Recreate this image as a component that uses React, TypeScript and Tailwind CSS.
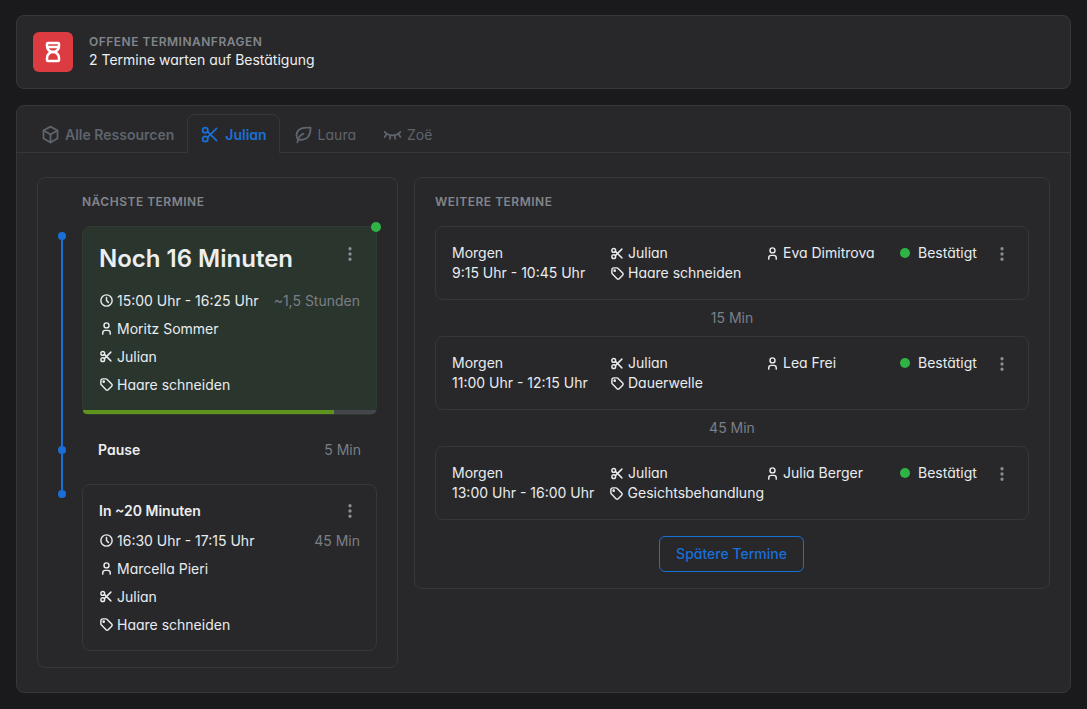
import React from "react";
import { TbHourglassHigh, TbBox, TbScissors, TbLeaf, TbEyeClosed, TbClock, TbUser, TbTag, TbDotsVertical } from "react-icons/tb";

const s = { size: 15, strokeWidth: 2.3 };

function Row({ icon, text, right, cls }: { icon: React.ReactNode; text: string; right?: string; cls?: string }) {
  return (
    <div className={`flex items-center justify-between h-[28px] ${cls ?? ""}`}>
      <div className="flex items-center gap-[3px] text-[14px] text-[#e9ecef]">
        <span className="w-[16px] -ml-[1px] flex justify-center text-[#e9ecef]">{icon}</span>
        <span>{text}</span>
      </div>
      {right && <span className="text-[14px] text-[#7a7f87]">{right}</span>}
    </div>
  );
}

function Future({ time, name, service }: { time: string; name: string; service: string }) {
  return (
    <div className="flex h-[74px] border border-[#36373a] rounded-[8px] pl-[16px] pt-[16px] text-[14px] leading-[20px] text-[#e9ecef]">
      <div className="w-[157px] shrink-0">
        <div>Morgen</div>
        <div>{time}</div>
      </div>
      <div className="w-[155px] shrink-0">
        <div className="flex items-center gap-[3px]"><span className="w-[16px] flex justify-center"><TbScissors {...s} /></span><span>Julian</span></div>
        <div className="flex items-center gap-[3px]"><span className="w-[16px] flex justify-center"><TbTag {...s} /></span><span>{service}</span></div>
      </div>
      <div className="w-[136px] shrink-0 flex items-start gap-[3px]">
        <span className="w-[16px] h-[20px] flex items-center justify-center"><TbUser {...s} /></span><span>{name}</span>
      </div>
      <div className="flex items-start">
        <span className="h-[20px] flex items-center"><span className="w-[10px] h-[10px] rounded-full bg-[#2fb344]" /></span>
        <span className="ml-[8px] w-[59px]">Bestätigt</span>
      </div>
      <span className="ml-[16px] mt-[1px] h-[20px] flex items-center text-[#868e96]"><TbDotsVertical size={18} strokeWidth={2.4} /></span>
    </div>
  );
}

function Gap({ t }: { t: string }) {
  return <div className="h-[36px] pb-[1px] flex items-center justify-center text-[14px] text-[#7a7f87]">{t}</div>;
}

function Tab({ icon, label, active, cls }: { icon: React.ReactNode; label: string; active?: boolean; cls?: string }) {
  return (
    <div className={`flex items-center gap-[4px] h-[39px] px-[12px] text-[14px] rounded-t-[8px] border border-b-0 -mb-px ${active ? "border-[#36373a] bg-[#28282a] text-[#1a6fd6] font-semibold" : "border-transparent text-[#5f646c] font-normal"} ${cls ?? ""}`}>
      {icon}
      <span>{label}</span>
    </div>
  );
}

export default function App() {
  return (
    <div className="min-h-screen bg-[#1a1a1c] pt-[15px] px-[16px] pb-[16px] font-['Inter','Liberation_Sans',sans-serif] [font-feature-settings:'cv11']">
      <div className="h-[74px] bg-[#28282a] border border-[#36373a] rounded-[8px] flex items-center pl-[16px] gap-[16px]">
        <div className="w-[40px] h-[40px] rounded-[6px] bg-[#dc3c41] flex items-center justify-center text-white">
          <TbHourglassHigh size={24} strokeWidth={2.5} />
        </div>
        <div className="pb-[1px]">
          <div className="text-[12px] leading-[18px] font-semibold tracking-[0.5px] text-[#82868c] uppercase">Offene Terminanfragen</div>
          <div className="-mt-[1px] text-[14px] leading-[20px] text-[#eceef0]">2 Termine warten auf Bestätigung</div>
        </div>
      </div>

      <div className="mt-[16px] h-[588px] bg-[#28282a] border border-[#36373a] rounded-[8px]">
        <div className="h-[47px] pt-[8px] flex border-b border-[#36373a] pl-[10px]">
          <Tab icon={<TbBox size={21} />} label="Alle Ressourcen" cls="!font-semibold" />
          <Tab icon={<TbScissors size={21} />} label="Julian" active />
          <Tab icon={<TbLeaf size={21} />} label="Laura" />
          <Tab icon={<TbEyeClosed size={21} />} label="Zoë" />
        </div>
        <div className="flex items-start gap-[16px] pt-[24px] px-[20px]">
          <div className="w-[361px] h-[491px] shrink-0 border border-[#36373a] rounded-[8px] flex pl-[19px]">
            <div className="w-[10px] pt-[54px] flex flex-col items-center shrink-0">
              <span className="w-[8px] h-[8px] rounded-full bg-[#1a6fd6] shrink-0" />
              <span className="w-[2px] h-[206px] bg-[#1a6fd6] shrink-0" />
              <span className="w-[8px] h-[8px] rounded-full bg-[#1a6fd6] shrink-0" />
              <span className="w-[2px] h-[36px] bg-[#1a6fd6] shrink-0" />
              <span className="w-[8px] h-[8px] rounded-full bg-[#1a6fd6] shrink-0" />
            </div>
            <div className="ml-[15px] w-[295px] shrink-0">
              <div className="h-[48px] pt-[15px] text-[12px] leading-[18px] font-semibold tracking-[0.5px] text-[#82868c] uppercase">Nächste Termine</div>
              <div className="relative h-[189px] rounded-[8px] bg-[#2a352d] border border-[#303c33] flex flex-col">
                <span className="absolute -right-[5px] -top-[5px] w-[10px] h-[10px] rounded-full bg-[#2fb344]" />
                <div className="flex-1 pl-[16px] pr-[16px] pt-[14px]">
                  <div className="flex justify-between items-start h-[36px]">
                    <span className="text-[24px] leading-[36px] font-semibold text-[#eceef0]">Noch 16 Minuten</span>
                    <span className="mt-[4px] mr-[1px] text-[#8a8f96]"><TbDotsVertical size={18} strokeWidth={2.4} /></span>
                  </div>
                  <div className="mt-[9px]">
                    <Row icon={<TbClock {...s} />} text="15:00 Uhr - 16:25 Uhr" right="~1,5 Stunden" />
                    <Row icon={<TbUser {...s} />} text="Moritz Sommer" />
                    <Row icon={<TbScissors {...s} />} text="Julian" />
                    <Row icon={<TbTag {...s} />} text="Haare schneiden" />
                  </div>
                </div>
                <div className="h-[4px] bg-[#45464b] rounded-b-[8px] overflow-hidden">
                  <div className="h-full w-[85.5%] bg-[#5f941c]" />
                </div>
              </div>
              <div className="h-[69px] pl-[16px] pr-[16px] flex items-center justify-between text-[14px]">
                <span className="font-semibold text-[#eceef0]">Pause</span>
                <span className="text-[#7a7f87]">5 Min</span>
              </div>
              <div className="h-[167px] border border-[#36373a] rounded-[8px] pl-[16px] pr-[16px] pt-[15px]">
                <div className="flex justify-between items-center h-[20px]">
                  <span className="text-[14px] font-semibold text-[#eceef0]">In ~20 Minuten</span>
                  <span className="mt-[2px] mr-[1px] text-[#8a8f96]"><TbDotsVertical size={18} strokeWidth={2.4} /></span>
                </div>
                <div className="mt-[6px]">
                  <Row icon={<TbClock {...s} />} text="16:30 Uhr - 17:15 Uhr" right="45 Min" />
                  <Row icon={<TbUser {...s} />} text="Marcella Pieri" />
                  <Row icon={<TbScissors {...s} />} text="Julian" />
                  <Row icon={<TbTag {...s} />} text="Haare schneiden" />
                </div>
              </div>
            </div>
          </div>

          <div className="w-[636px] h-[412px] shrink-0 border border-[#36373a] rounded-[8px] px-[20px]">
            <div className="h-[48px] pt-[15px] text-[12px] leading-[18px] font-semibold tracking-[0.5px] text-[#82868c] uppercase">Weitere Termine</div>
            <Future time="9:15 Uhr - 10:45 Uhr" name="Eva Dimitrova" service="Haare schneiden" />
            <Gap t="15 Min" />
            <Future time="11:00 Uhr - 12:15 Uhr" name="Lea Frei" service="Dauerwelle" />
            <Gap t="45 Min" />
            <Future time="13:00 Uhr - 16:00 Uhr" name="Julia Berger" service="Gesichtsbehandlung" />
            <div className="mt-[16px] pr-[2px] flex justify-center">
              <button className="h-[36px] w-[145px] pb-[1px] pl-[1px] rounded-[6px] border border-[#1a6fd6] text-[14px] font-medium text-[#1a6fd6]">Spätere Termine</button>
            </div>
          </div>
        </div>
      </div>
    </div>
  );
}
